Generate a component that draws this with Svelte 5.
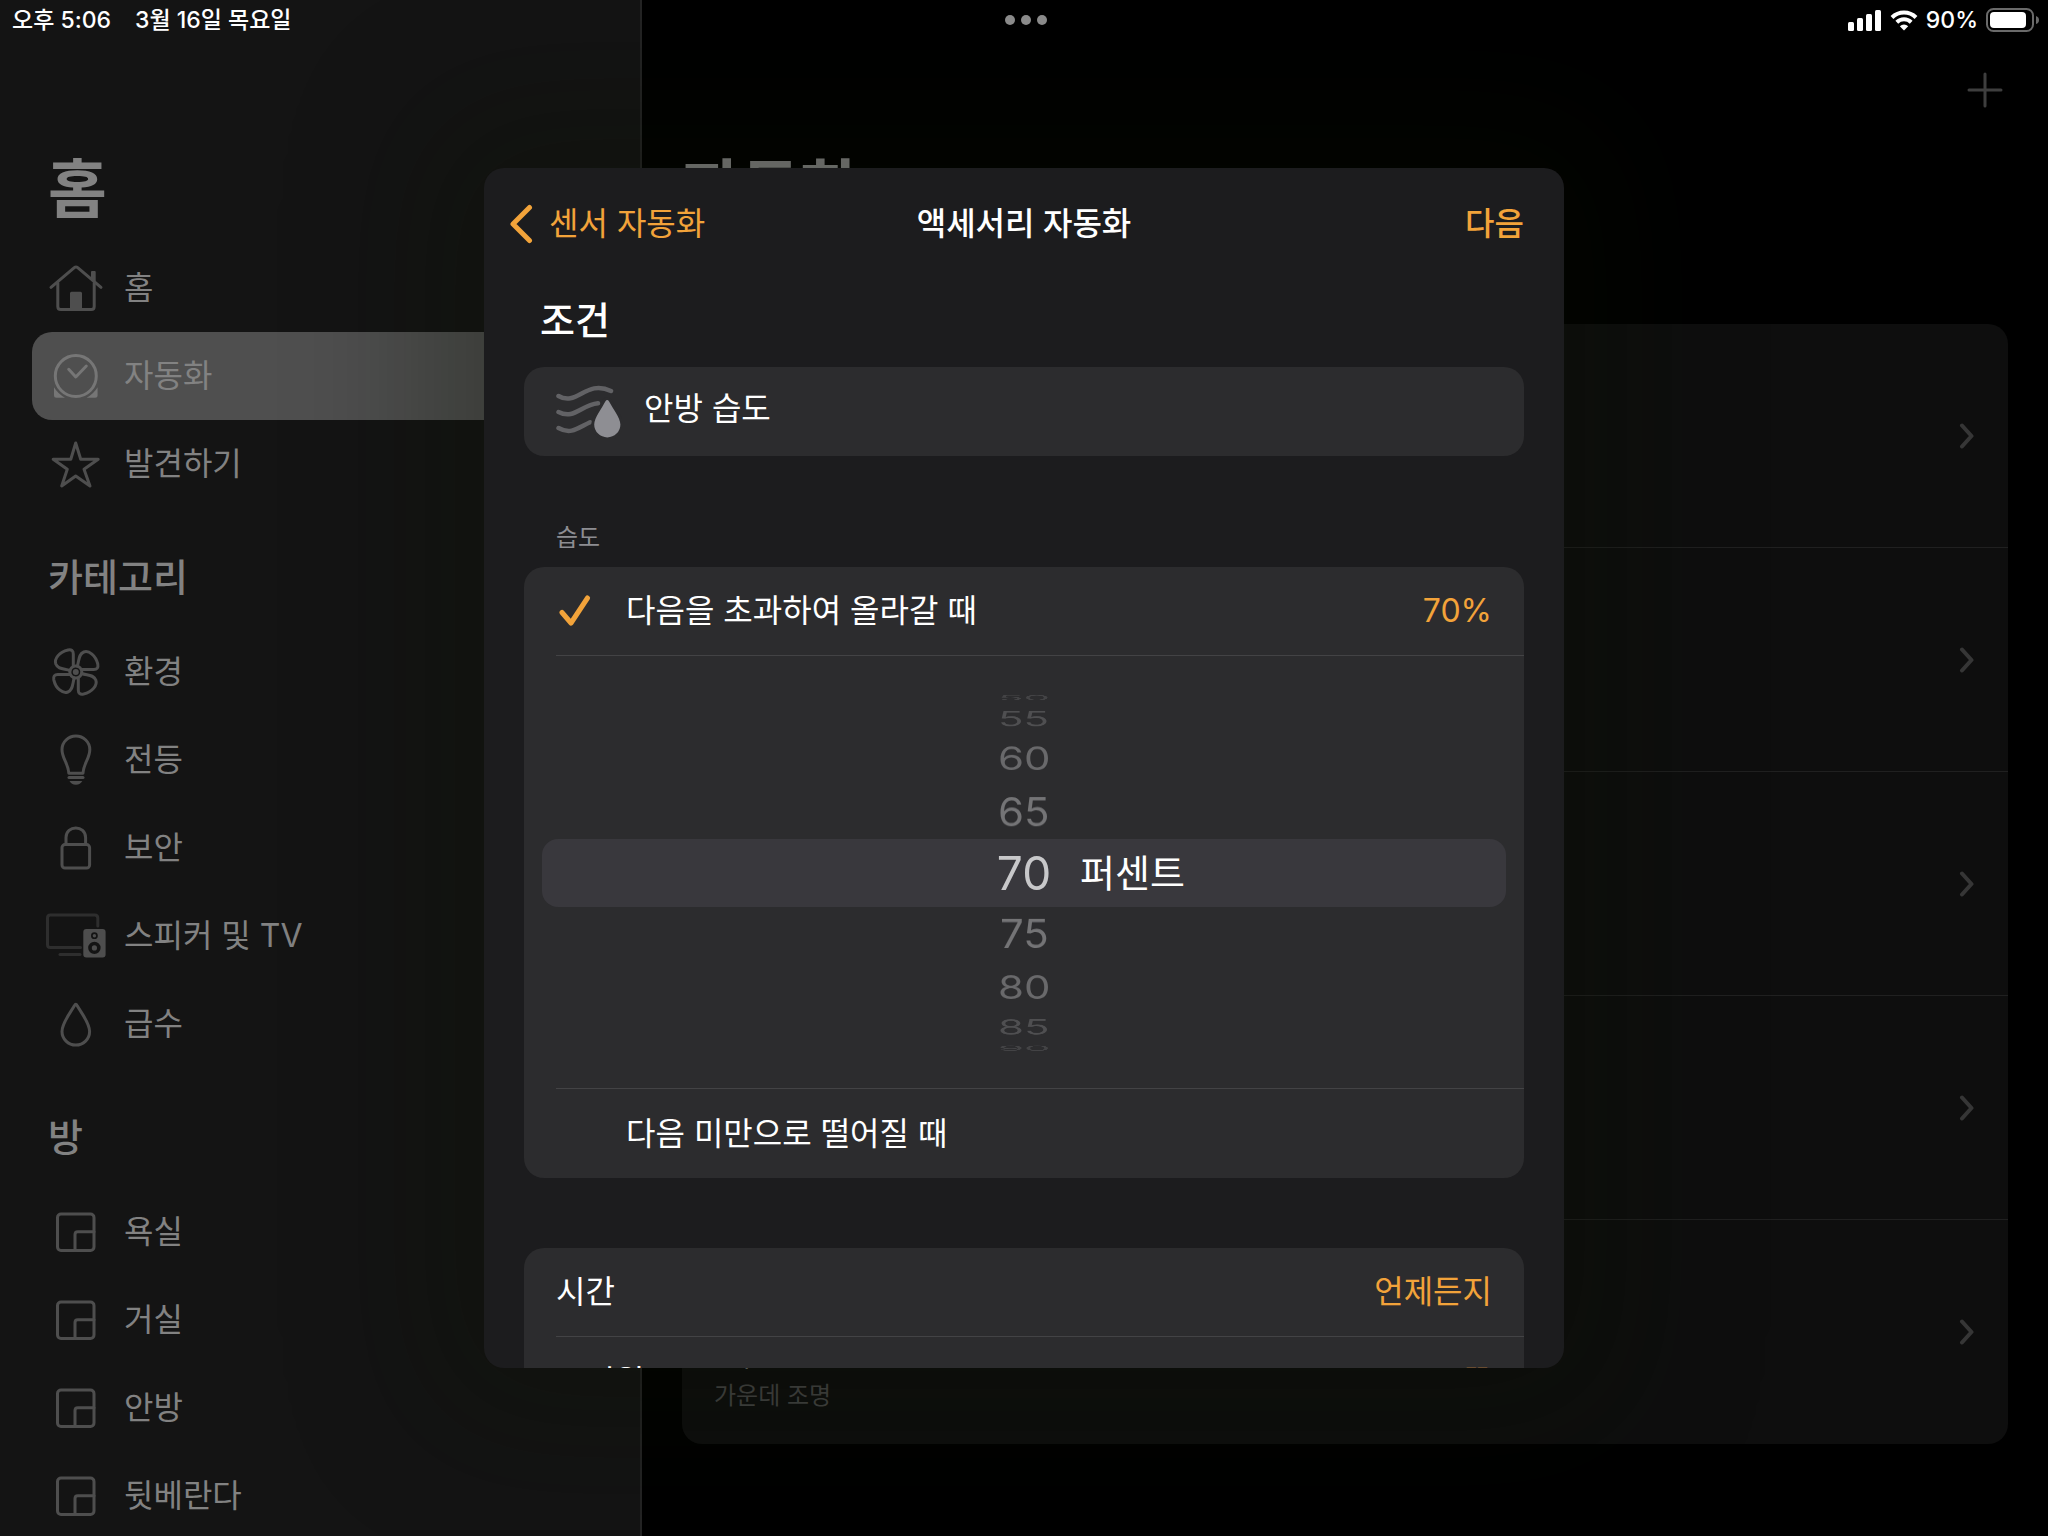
<script>
    const menu = [
        { icon: "home", label: "홈" },
        { icon: "clock", label: "자동화" },
        { icon: "star", label: "발견하기" },
    ];
    const categories = [
        { icon: "fan", label: "환경" },
        { icon: "bulb", label: "전등" },
        { icon: "lock", label: "보안" },
        { icon: "tv", label: "스피커 및 TV" },
        { icon: "drop", label: "급수" },
    ];
    const rooms = ["욕실", "거실", "안방", "뒷베란다"].map((label) => ({ icon: "room", label }));

    const automations = [
        { title: "", detail: "" },
        { title: "", detail: "" },
        { title: "", detail: "" },
        { title: "", detail: "" },
        { title: "밤, 안방 습도", detail: "가운데 조명" },
    ];

    // picker wheel, one step is 20 degrees on the drum
    const STEP = 20;
    const values = Array.from({ length: 21 }, (_, i) => i * 5);
    let current = $state("자동화");
    let percent = $state(70);
    let above = $state(true);

    let wheel = $derived(
        values
            .map((value) => ({ value, offset: (value - percent) / 5 }))
            .filter((v) => Math.abs(v.offset) <= 4)
    );
</script>

{#snippet icon(name)}
    <svg class="icon" viewBox="0 0 60 60" aria-hidden="true">
        {#if name == "home"}
            <path d="M5 29.3 28.3 9.6Q30 8.3 31.7 9.6L55 29.3" />
            <path d="M11.8 25V48.5Q11.8 51.5 14.8 51.5H45.2Q48.2 51.5 48.2 48.5V25" />
            <path class="fill" d="M45 21V14Q45 13 46 13H48.7Q49.7 13 49.7 14V26ZM24 51V35.2Q24 33.7 25.5 33.7H34.5Q36 33.7 36 35.2V51Z" />
        {:else if name == "clock"}
            <circle cx="29.8" cy="30" r="20.5" />
            <path d="M22.7 23.3 29.8 31 40.3 20" />
            <path class="fill" d="M8 41.3Q12 48 19 51.7H10.5Q8 51.7 8 49.2ZM51.6 41.3Q47.6 48 40.6 51.7H49Q51.6 51.7 51.6 49.2Z" />
        {:else if name == "star"}
            <path d="M29.7 9 34.7 25.2H52.2L38 35.3 44 52 29.7 42 15.7 52 21.3 35.3 7.2 25.2H24.8Z" />
        {:else if name == "fan"}
            {#each [0, 90, 180, 270] as turn}
                <path transform="rotate({turn} 29.8 30)" d="M27.3 24V12Q27.3 7 22 8C13 10 8 17 9.8 22C12 27.5 18 26.5 24 28.5" />
            {/each}
            <circle cx="29.8" cy="30" r="6" />
            <circle class="fill" cx="29.8" cy="30" r="3" />
        {:else if name == "bulb"}
            <path d="M22.8 43.3C22.3 33 16 29 16 19.5A13.9 13.5 0 0 1 43.8 19.5C43.8 29 37.5 33 37 43.3Z" />
            <path d="M23 47.6H37" />
            <path class="fill" d="M23.5 51H36.3Q34.5 54.7 29.9 54.7T23.5 51Z" />
        {:else if name == "lock"}
            <rect x="16" y="26.6" width="27.6" height="23.4" rx="3" />
            <path d="M20 26V19.5C20 6.7 39.6 6.7 39.6 19.5V26" />
        {:else if name == "tv"}
            <g class="dim">
                <path d="M34.5 41.5H4.2Q1.5 41.5 1.5 38.5V12Q1.5 9 4.2 9H48.8Q51.8 9 51.8 12V20" />
                <path d="M14 48.6H34" />
            </g>
            <path class="fill" fill-rule="evenodd" d="M40.3 22.9H56.6Q59.6 22.9 59.6 25.9V48.5Q59.6 51.5 56.6 51.5H40.3Q37.3 51.5 37.3 48.5V25.9Q37.3 22.9 40.3 22.9ZM48.4 26.3A3.4 3.4 0 1 0 48.4 33.1A3.4 3.4 0 1 0 48.4 26.3ZM48.4 35.7A6.2 6.2 0 1 0 48.4 48.1A6.2 6.2 0 1 0 48.4 35.7Z" />
            <circle class="fill" cx="48.4" cy="29.7" r="1.7" />
            <circle class="fill" cx="48.4" cy="41.9" r="2.6" />
        {:else if name == "drop"}
            <path d="M28.5 11.5Q29.8 9 31.1 11.5C36 20 43.6 29 43.6 37.5A13.8 13.6 0 0 1 16 37.5C16 29 23.6 20 28.5 11.5Z" />
        {:else if name == "room"}
            <rect x="11.5" y="12" width="36.5" height="36.5" rx="3.5" />
            <path d="M29 48.5V32.5Q29 29.7 31.8 29.7H48" />
        {/if}
    </svg>
{/snippet}

{#snippet list(items)}
    <ul>
        {#each items as item}
            <li>
                <button class="item" class:active={item.label == current} onclick={() => (current = item.label)}>
                    {@render icon(item.icon)}
                    <span>{item.label}</span>
                </button>
            </li>
        {/each}
    </ul>
{/snippet}

{#snippet check(on)}
    <span class="mark">
        {#if on}
            <svg viewBox="0 0 32 32" aria-hidden="true"><path d="M3 17.5 12 28 28.5 3" /></svg>
        {/if}
    </span>
{/snippet}

<div class="app">
    <header class="status">
        <div class="left">
            <span>오후 5:06</span>
            <span>3월 16일 목요일</span>
        </div>
        <div class="dots"><i></i><i></i><i></i></div>
        <div class="right">
            <svg class="signal" viewBox="0 0 34 21" aria-hidden="true">
                <rect x="0" y="12" width="6" height="9" rx="1.5" />
                <rect x="9" y="8" width="6" height="13" rx="1.5" />
                <rect x="18" y="4" width="6" height="17" rx="1.5" />
                <rect x="27" y="0" width="6" height="21" rx="1.5" />
            </svg>
            <svg class="wifi" viewBox="0 0 28 21" aria-hidden="true">
                <path d="M2 7.5A17 17 0 0 1 26 7.5M6.8 12.3A10.3 10.3 0 0 1 21.2 12.3" />
                <path class="solid" d="M14 20.5 9.8 16.3A6 6 0 0 1 18.2 16.3Z" />
            </svg>
            <span>90%</span>
            <svg class="battery" viewBox="0 0 54 24" aria-hidden="true">
                <rect class="case" x="1" y="1" width="46" height="22" rx="6.5" />
                <rect x="4" y="4" width="36" height="16" rx="4" />
                <path class="nub" d="M50 8Q53 9 53 12T50 16Z" />
            </svg>
        </div>
    </header>

    <nav class="sidebar">
        <h1>홈</h1>
        {@render list(menu)}
        <h2>카테고리</h2>
        {@render list(categories)}
        <h2>방</h2>
        {@render list(rooms)}
    </nav>

    <main>
        <div class="toolbar">
            <button class="add" aria-label="추가">
                <svg viewBox="0 0 36 36" aria-hidden="true"><path d="M18 2V34M2 18H34" /></svg>
            </button>
        </div>
        <h1>자동화</h1>
        <ul class="automations">
            {#each automations as item}
                <li>
                    <div class="about">
                        <strong>{item.title}</strong>
                        <span>{item.detail}</span>
                    </div>
                    <svg class="chevron" viewBox="0 0 16 26" aria-hidden="true"><path d="M3 2.5 12.5 13 3 23.5" /></svg>
                </li>
            {/each}
        </ul>
    </main>

    <div class="overlay">
        <div class="sheet" role="dialog" aria-labelledby="sheet-title">
            <div class="bar">
                <button class="back">
                    <svg viewBox="0 0 24 40" aria-hidden="true"><path d="M20.5 3.5 4 20 20.5 36.5" /></svg>
                    <span>센서 자동화</span>
                </button>
                <h2 id="sheet-title">액세서리 자동화</h2>
                <button class="next">다음</button>
            </div>

            <h3>조건</h3>
            <section class="card">
                <div class="row sensor">
                    <svg viewBox="0 0 66 54" aria-hidden="true">
                        <path d="M2.5 11C21 22 30 -6 55 6M2.5 27C18 35 25 20 42 18.3M2.5 43C15 50 22 43 34 37.3" />
                        <path class="water" d="M49.3 16.5Q51.2 13.7 53.1 16.5C56.5 23 64.4 33 64.4 39.5A13.1 12.9 0 0 1 38.2 39.5C38.2 33 46 23 49.3 16.5Z" />
                    </svg>
                    <span>안방 습도</span>
                </div>
            </section>

            <h4>습도</h4>
            <section class="card">
                <button class="row" aria-pressed={above} onclick={() => (above = true)}>
                    {@render check(above)}
                    <span>다음을 초과하여 올라갈 때</span>
                    <span class="value">{percent}%</span>
                </button>
                <div class="picker">
                    <div class="band">
                        <span></span>
                        <div class="wheel" role="listbox" aria-label="퍼센트">
                            {#each wheel as { value, offset } (value)}
                                <button
                                    class="step step-{Math.abs(offset)}"
                                    role="option"
                                    aria-selected={offset == 0}
                                    style="transform: rotateX({-offset * STEP}deg) translateZ(178px)"
                                    onclick={() => (percent = value)}>{value}</button>
                            {/each}
                        </div>
                        <span class="unit">퍼센트</span>
                    </div>
                </div>
                <button class="row" aria-pressed={!above} onclick={() => (above = false)}>
                    {@render check(!above)}
                    <span>다음 미만으로 떨어질 때</span>
                </button>
            </section>

            <section class="card extra">
                <button class="row"><span>시간</span><span class="value">언제든지</span></button>
                <button class="row"><span>구성원</span><span class="value">끔</span></button>
            </section>
        </div>
    </div>
</div>

<style>
    :global(body) {
        background: #000;
    }
    .app {
        position: relative;
        display: flex;
        height: 100vh;
        overflow: hidden;
        font-family: "Inter", "Noto Sans CJK KR", sans-serif;
        font-size: 32px;
        line-height: 40px;
        color: #828282;
    }
    h1, h2, h3, h4, ul {
        margin: 0;
        padding: 0;
        list-style: none;
    }
    button {
        font: inherit;
        color: inherit;
        background: none;
        border: 0;
        margin: 0;
        padding: 0;
        text-align: left;
        cursor: pointer;
    }
    svg {
        display: block;
        flex: none;
        fill: none;
        stroke: currentColor;
        stroke-linecap: round;
        stroke-linejoin: round;
    }

    /* status bar */
    .status {
        position: absolute;
        inset: 0 0 auto 0;
        z-index: 3;
        height: 40px;
        padding: 0 8px 0 12px;
        display: grid;
        grid-template-columns: 1fr auto 1fr;
        align-items: center;
        font-size: 23px;
        font-weight: 500;
        color: #fff;
    }
    .status .left {
        display: flex;
        gap: 24px;
    }
    .status .right {
        display: flex;
        align-items: center;
        justify-content: flex-end;
        gap: 8px;
    }
    .status svg {
        fill: #fff;
        stroke: none;
    }
    .dots {
        display: flex;
        gap: 6px;
    }
    .dots i {
        width: 10px;
        height: 10px;
        border-radius: 50%;
        background: #8a8a8a;
    }
    .signal {
        width: 34px;
    }
    .wifi {
        width: 28px;
    }
    .status .wifi path {
        fill: none;
        stroke: #fff;
        stroke-width: 4;
        stroke-linecap: butt;
    }
    .status .wifi .solid {
        fill: #fff;
        stroke: none;
    }
    .battery {
        width: 54px;
    }
    .battery .case {
        fill: none;
        stroke: #6a6a6a;
        stroke-width: 2;
    }
    .battery .nub {
        fill: #6a6a6a;
    }

    /* sidebar */
    .sidebar {
        flex: none;
        width: 640px;
        background: #141414;
        border-right: 2px solid #242424;
    }
    .sidebar h1 {
        padding: 149px 48px 15px;
        font-size: 64px;
        line-height: 80px;
    }
    .sidebar h2 {
        padding: 45px 48px 27px;
        font-size: 38px;
        font-weight: 500;
        line-height: 48px;
    }
    .sidebar ul {
        padding-left: 32px;
    }
    .item {
        display: flex;
        align-items: center;
        gap: 18px;
        width: 100%;
        height: 88px;
        padding-left: 14px;
        border-radius: 20px;
    }
    .item.active {
        background: #4f4f4f;
    }
    .icon {
        width: 60px;
        height: 60px;
        color: #4e4e4e;
        stroke-width: 3;
    }
    .icon .fill {
        fill: currentColor;
        stroke: none;
    }
    .icon .dim {
        stroke: #2e2e2e;
    }
    .active .icon {
        color: #767676;
    }

    /* automations behind the sheet */
    main {
        flex: 1;
        padding: 0 40px;
    }
    .toolbar {
        display: flex;
        justify-content: flex-end;
        padding: 72px 5px 0 0;
    }
    .add svg {
        width: 36px;
        stroke: #3e3e3e;
        stroke-width: 3;
    }
    main h1 {
        padding: 41px 0 95px;
        font-size: 64px;
        line-height: 80px;
    }
    .automations {
        background: #0e0e0e;
        border-radius: 20px;
    }
    .automations li {
        display: flex;
        align-items: center;
        justify-content: space-between;
        box-sizing: border-box;
        height: 224px;
        margin-left: 32px;
        padding-right: 33px;
        border-bottom: 1px solid #202020;
    }
    .automations li:last-child {
        border-bottom: 0;
    }
    .about {
        align-self: flex-end;
        display: flex;
        flex-direction: column;
        gap: 8px;
        padding-bottom: 32px;
    }
    .about strong {
        font-weight: 400;
    }
    .about span {
        font-size: 24px;
        line-height: 32px;
        color: #454545;
    }
    .chevron {
        width: 16px;
        stroke: #363636;
        stroke-width: 4;
    }

    /* sheet */
    .overlay {
        position: absolute;
        inset: 0;
        z-index: 2;
        display: flex;
        align-items: center;
        justify-content: center;
    }
    .sheet {
        box-sizing: border-box;
        width: 100%;
        max-width: 1080px;
        height: calc(100vh - 336px);
        padding: 0 40px;
        overflow: hidden;
        border-radius: 20px;
        background: #1c1c1e;
        color: #fff;
        box-shadow: 0 0 140px 60px rgba(10, 16, 0, 0.3);
    }
    .bar {
        display: grid;
        grid-template-columns: 1fr auto 1fr;
        align-items: center;
        height: 112px;
    }
    .bar h2 {
        font-size: 32px;
        font-weight: 500;
    }
    .back {
        display: flex;
        align-items: center;
        gap: 16px;
        margin-left: -15px;
        color: #f2a33a;
    }
    .back svg {
        width: 24px;
        stroke-width: 5;
    }
    .next {
        justify-self: end;
        font-weight: 500;
        color: #f2a33a;
    }
    h3 {
        padding: 16px 16px 23px;
        font-size: 38px;
        font-weight: 500;
        line-height: 48px;
    }
    h4 {
        padding: 66px 32px 13px;
        font-size: 24px;
        font-weight: 400;
        line-height: 32px;
        color: #8d8d92;
    }
    .card {
        border-radius: 20px;
        background: #2c2c2e;
    }
    .card.extra {
        margin-top: 70px;
    }
    .row {
        display: flex;
        align-items: center;
        box-sizing: border-box;
        width: calc(100% - 32px);
        height: 89px;
        margin-left: 32px;
        padding-right: 32px;
        border-bottom: 1px solid #434345;
    }
    .row:last-child {
        border-bottom: 0;
    }
    .row .value {
        margin-left: auto;
        color: #f2a33a;
    }
    .sensor {
        gap: 22px;
    }
    .sensor span {
        padding-bottom: 6px;
    }
    .sensor svg {
        width: 66px;
        stroke: #626265;
        stroke-width: 4.5;
    }
    .sensor .water {
        fill: #8e8e93;
        stroke: #2c2c2e;
        stroke-width: 6;
        paint-order: stroke;
    }
    .mark {
        width: 70px;
    }
    .mark svg {
        width: 32px;
        margin-left: 3px;
        stroke: #f2a33a;
        stroke-width: 5;
    }
    .picker {
        display: flex;
        align-items: center;
        box-sizing: border-box;
        height: 433px;
        margin-left: 32px;
        padding: 2px 18px 0 0;
        border-bottom: 1px solid #434345;
    }
    .band {
        flex: 1;
        display: grid;
        grid-template-columns: 1fr auto 1fr;
        align-items: center;
        height: 68px;
        margin-left: -14px;
        border-radius: 16px;
        background: #39383d;
    }
    .wheel {
        display: grid;
        place-items: center;
        width: 80px;
        height: 68px;
        transform-style: preserve-3d;
    }
    .step {
        grid-area: 1 / 1;
        font-size: 42px;
        line-height: 48px;
        color: #747476;
    }
    .step-0 {
        font-size: 46px;
        color: #c8c8ca;
    }
    .step-2 {
        color: #69696b;
    }
    .step-3 {
        color: #4f4f51;
    }
    .step-4 {
        color: #434345;
    }
    .unit {
        padding-left: 16px;
        font-size: 38px;
        line-height: 48px;
    }
</style>
